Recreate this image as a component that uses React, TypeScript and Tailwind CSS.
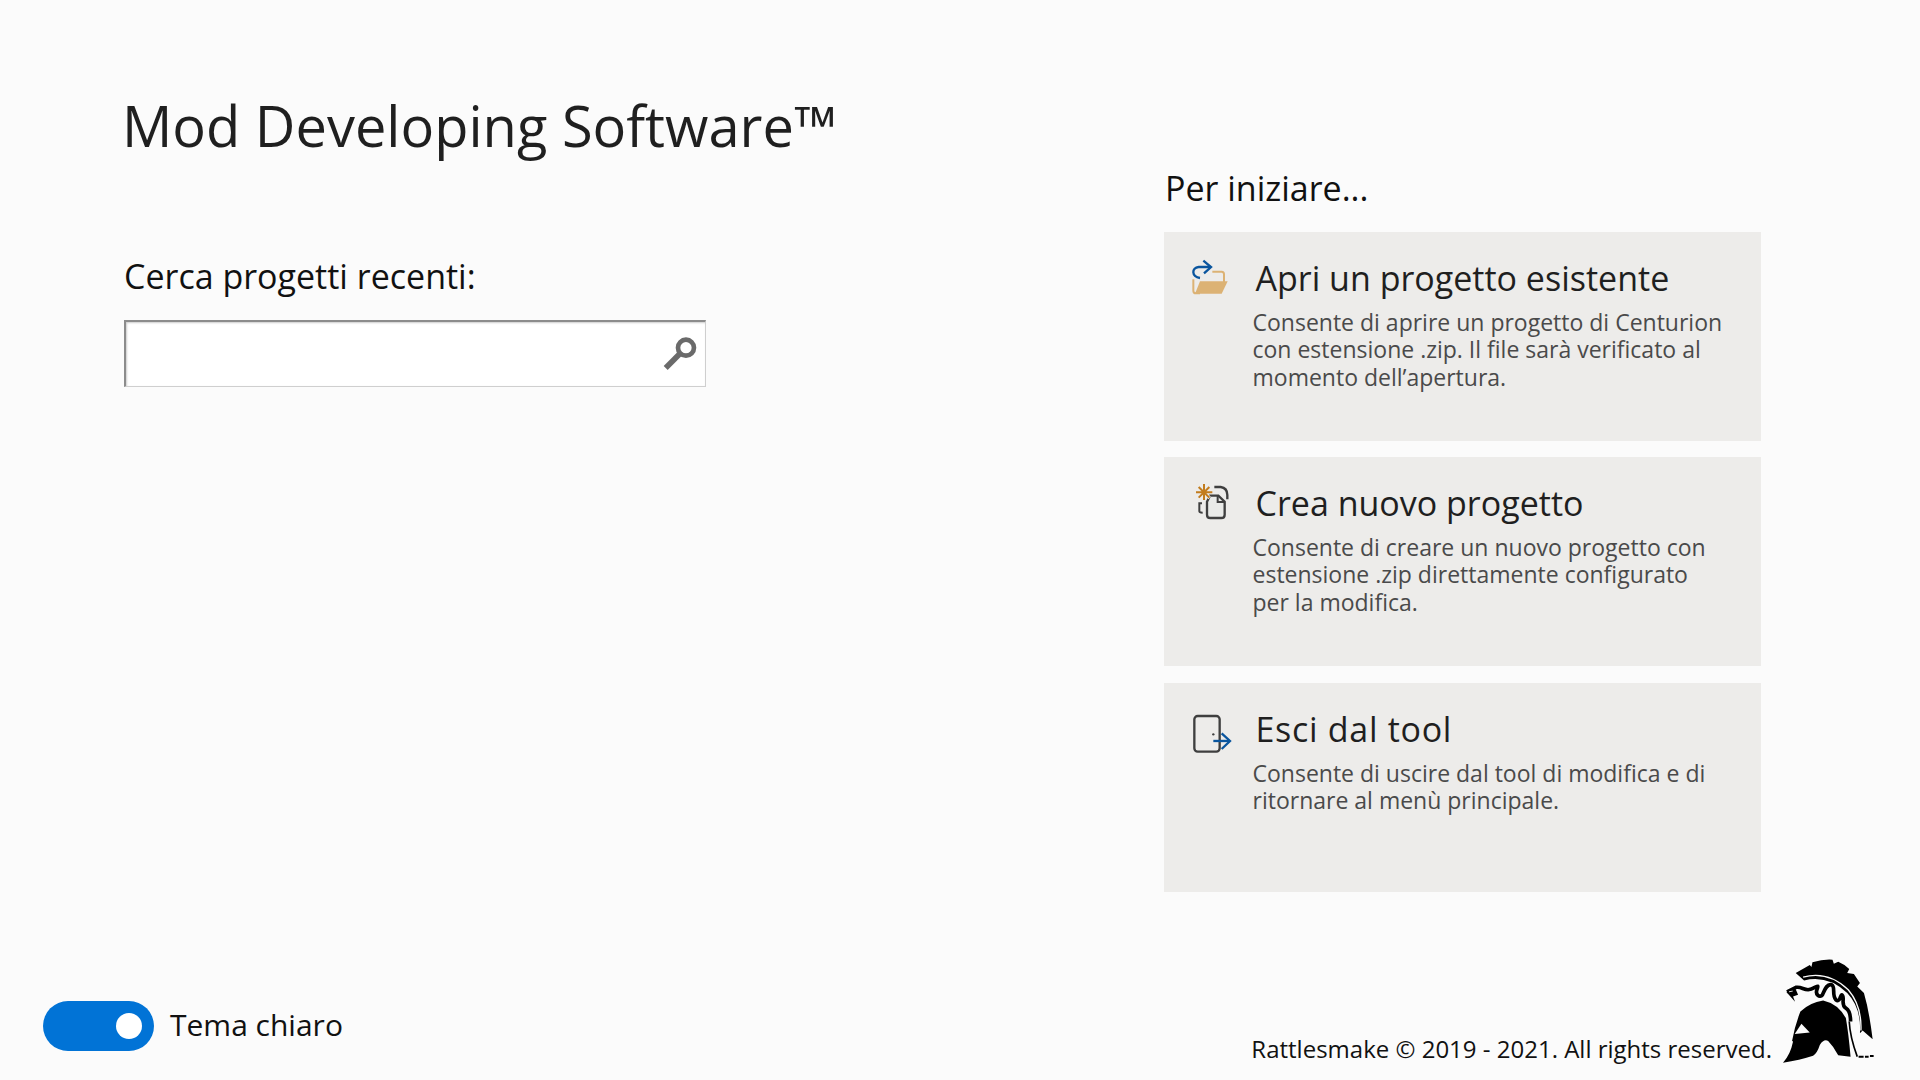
import React from "react";

function FolderIcon() {
  return (
    <svg width="45" height="40" viewBox="120 105 135 120" fill="none">
      <path d="M130 178V212Q130 220 138 220H150M187 155H215Q222 155 222 163V186" stroke="#dcb274" strokeWidth="6" />
      <path d="M150 184H233L215 221H135Z" fill="#dcb274" />
      <path d="M150 174C124 170 124 143 146 141H180" stroke="#0a559e" strokeWidth="7" />
      <path d="M160 122L183 141L162 160" stroke="#0a559e" strokeWidth="7" />
    </svg>
  );
}

function NewIcon() {
  return (
    <svg width="45" height="40" viewBox="120 60 135 120" fill="none">
      <path d="M193 81H212Q232 84 232 105V118" stroke="#3f3f3f" strokeWidth="7" />
      <path d="M156 130H148V154Q148 158 158 158" stroke="#3f3f3f" strokeWidth="6" />
      <path d="M171 125V164Q171 174 181 174H214Q224 174 224 164V125L205 107H180Z" fill="#e9eae8" stroke="#3f3f3f" strokeWidth="7" />
      <path d="M203 107V126H225" stroke="#3f3f3f" strokeWidth="6" />
      <path d="M162 70V122M137 97H188M145 80L179 114M179 80L145 114" stroke="#edecea" strokeWidth="10" />
      <path d="M162 72V120M138 97H187M146 81L178 113M178 81L146 113" stroke="#c27c1e" strokeWidth="6" />
    </svg>
  );
}

function ExitIcon() {
  return (
    <svg width="45" height="47.300" viewBox="120 48 135 142" fill="none">
      <rect x="133" y="78" width="76" height="107" rx="10" stroke="#3f3f3f" strokeWidth="7" />
      <circle cx="190" cy="133" r="3.500" fill="#3f3f3f" />
      <path d="M190 153H238" stroke="#0a559e" strokeWidth="7" />
      <path d="M215 130L240 153L215 177" stroke="#0a559e" strokeWidth="7" />
    </svg>
  );
}

function SearchIcon() {
  return (
    <svg width="43.300" height="36.700" viewBox="60 50 130 110" fill="none">
      <circle cx="135" cy="85" r="24" stroke="#6a6a6a" strokeWidth="14" />
      <path d="M115 105L74 146" stroke="#6a6a6a" strokeWidth="17" />
    </svg>
  );
}

function Helmet() {
  return (
    <svg width="92" height="106" viewBox="70 55 275 317" fill="none" className="shrink-0">
      <path d="M108 100L150 76L155 82L158 68Q190 58 218 60L222 72L235 66Q255 74 268 88L262 100L282 103L300 130L292 140L312 160Q328 215 338 298L308 272L300 280Q305 205 262 160Q205 105 133 122Z" fill="#000" />
      <path d="M130 112Q205 92 265 150Q306 198 303 272" stroke="#fbfbfb" strokeWidth="4" />
      <path d="M82 156L108 143C125 140 130 150 145 150C165 148 180 128 172 148C165 165 180 175 188 165C195 150 200 132 215 135C228 140 215 165 228 180C240 190 242 165 245 165C258 170 240 195 258 205C270 212 272 225 272 245" stroke="#000" strokeWidth="11" />
      <path d="M80 157L107 146L115 165L100 170L106 186L92 170Z" fill="#000" />
      <path d="M88 156L99 154" stroke="#fbfbfb" strokeWidth="2.500" />
      <path d="M122 215Q150 188 190 182Q235 192 258 235Q266 280 272 350L235 346Q222 320 205 303Q192 296 180 315Q172 340 160 347Q120 360 70 368Q92 345 100 305L97 303Q106 255 122 215Z" fill="#000" />
      <path d="M105 282L125 252L150 278Z" fill="#fbfbfb" />
      <path d="M268 245Q270 290 292 350" stroke="#000" strokeWidth="5" />
      <path d="M296 350H311M315 350H326M330 348H341" stroke="#000" strokeWidth="6" />
    </svg>
  );
}

function Card({ icon, title, desc, titleClass }: { icon: React.ReactNode; title: string; desc: string[]; titleClass?: string }) {
  return (
    <div className="flex h-[209px] w-[597px] bg-[#edecea] pt-[23px]">
      <div className="w-[91.500px] shrink-0 pl-[26px]">{icon}</div>
      <div className="pt-[1px]">
        <div className={`text-[34px] leading-[44px] text-[#1f1f1f] ${titleClass ?? ""}`}>{title}</div>
        <div className="-ml-[3px] mt-[9px] text-[23px] leading-[27.300px] text-[#4a4a4a]">
          {desc.map((d) => (
            <div key={d}>{d}</div>
          ))}
        </div>
      </div>
    </div>
  );
}

export default function App() {
  return (
    <div className="flex h-screen w-full flex-col justify-between overflow-hidden bg-[#fbfbfb] font-['Open_Sans',sans-serif]">
      <div className="flex">
        <div className="w-[1164px] shrink-0 pl-[123px] pt-[87px]">
          <div className="-ml-[1px] text-[56px] leading-[76px] text-[#1f1f1f]">Mod Developing Software™</div>
          <div className="ml-[1px] mt-[90px] text-[34px] leading-[46px] text-[#111]">Cerca progetti recenti:</div>
          <div className="ml-[1px] mt-[21px] flex h-[67px] w-[582px] items-center justify-end border border-l-2 border-t-2 border-[#cfcfcf] border-l-[#8c8c8c] border-t-[#8c8c8c] bg-white pr-[1px] shadow-[inset_1px_1px_2px_rgba(0,0,0,0.2)]">
            <SearchIcon />
          </div>
        </div>
        <div className="w-[597px] shrink-0 pt-[165px]">
          <div className="pl-[1px] text-[34px] leading-[46px] text-[#111]">Per iniziare...</div>
          <div className="mt-[21px] flex flex-col gap-[16px]">
            <Card icon={<FolderIcon />} title="Apri un progetto esistente" desc={["Consente di aprire un progetto di Centurion", "con estensione .zip. Il file sarà verificato al", "momento dell’apertura."]} />
            <Card icon={<NewIcon />} title="Crea nuovo progetto" desc={["Consente di creare un nuovo progetto con", "estensione .zip direttamente configurato", "per la modifica."]} />
            <div className="mt-[1px]">
              <Card icon={<ExitIcon />} title="Esci dal tool" titleClass="tracking-[0.7px]" desc={["Consente di uscire dal tool di modifica e di", "ritornare al menù principale."]} />
            </div>
          </div>
        </div>
      </div>
      <div className="flex items-end justify-between pb-[16px] pl-[43px] pr-[45px]">
        <div className="mb-[13px] flex items-center gap-[16px]">
          <div className="flex h-[50px] w-[111px] items-center justify-end rounded-full bg-[#0173d6] pr-[12px]">
            <div className="h-[26px] w-[26px] rounded-full bg-white" />
          </div>
          <div className="-mt-[2px] text-[30px] leading-[40px] text-[#111]">Tema chiaro</div>
        </div>
        <div className="flex items-end gap-[11px]">
          <div className="-mb-[2px] text-[24px] leading-[34px] text-[#111]">Rattlesmake © 2019 - 2021. All rights reserved.</div>
          <Helmet />
        </div>
      </div>
    </div>
  );
}
